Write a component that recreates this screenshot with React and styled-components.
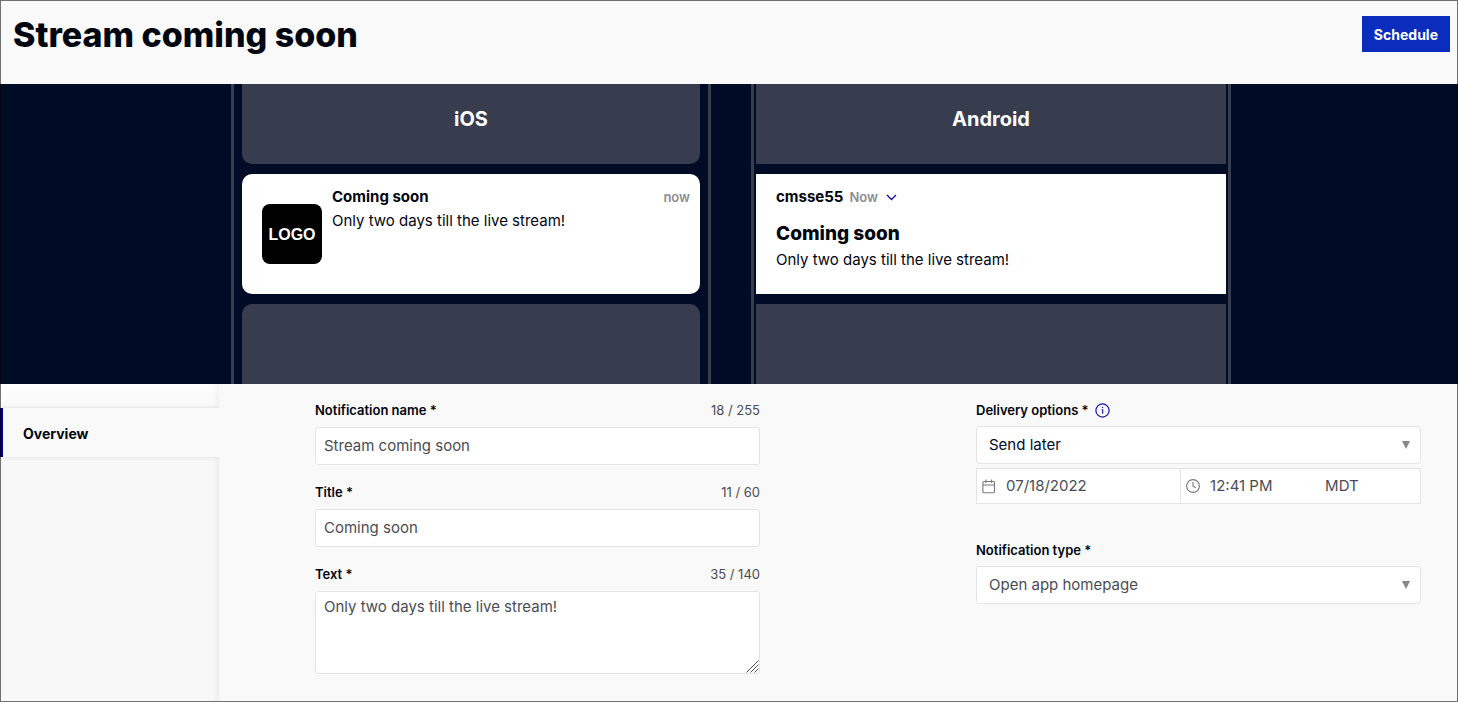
import { useState } from "react";
import styled, { createGlobalStyle } from "styled-components";

function App() {
  const [name, setName] = useState("Stream coming soon");
  const [title, setTitle] = useState("Coming soon");
  const [text, setText] = useState("Only two days till the live stream!");
  const [date, setDate] = useState("07/18/2022");
  const [time, setTime] = useState("12:41 PM");

  return (
    <>
      <GlobalStyle />
      <Page>
        <Header>
          <PageTitle>{name}</PageTitle>
          <ScheduleButton type="button">Schedule</ScheduleButton>
        </Header>

        <Preview>
          <Phone $inset="8px" $radius="10px">
            <Block>iOS</Block>
            <IosCard>
              <Logo>LOGO</Logo>
              <IosBody>
                <IosTop>
                  <AppName>{title}</AppName>
                  <Time>now</Time>
                </IosTop>
                <Message>{text}</Message>
              </IosBody>
            </IosCard>
            <Block />
          </Phone>
          <Phone $inset="2px" $radius="0">
            <Block>Android</Block>
            <AndroidCard>
              <AndroidTop>
                <AppName>cmsse55</AppName>
                <Time>Now</Time>
                <ChevronIcon />
              </AndroidTop>
              <AndroidTitle>{title}</AndroidTitle>
              <Message>{text}</Message>
            </AndroidCard>
            <Block />
          </Phone>
        </Preview>

        <Content>
          <Sidebar>
            <Tab href="#overview">Overview</Tab>
          </Sidebar>
          <Form>
            <Column $gap="18px">
              <Field $gap="8px">
                <LabelRow>
                  <Label htmlFor="name">Notification name *</Label>
                  <Counter>{name.length} / 255</Counter>
                </LabelRow>
                <Input id="name" value={name} onChange={(e) => setName(e.target.value)} />
              </Field>
              <Field $gap="8px">
                <LabelRow>
                  <Label htmlFor="title">Title *</Label>
                  <Counter>{title.length} / 60</Counter>
                </LabelRow>
                <Input id="title" value={title} onChange={(e) => setTitle(e.target.value)} />
              </Field>
              <Field $gap="8px">
                <LabelRow>
                  <Label htmlFor="text">Text *</Label>
                  <Counter>{text.length} / 140</Counter>
                </LabelRow>
                <TextAreaBox>
                  <TextArea id="text" value={text} onChange={(e) => setText(e.target.value)} />
                  <GripIcon />
                </TextAreaBox>
              </Field>
            </Column>

            <Column $gap="37px">
              <Field $gap="7px">
                <LabelRow>
                  <Label htmlFor="delivery">
                    Delivery options *
                    <InfoIcon />
                  </Label>
                </LabelRow>
                <SelectBox>
                  <Select id="delivery" $color="#000a1f" defaultValue="later">
                    <option value="now">Send now</option>
                    <option value="later">Send later</option>
                  </Select>
                  <ArrowIcon />
                </SelectBox>
                <DateRow>
                  <DateBox>
                    <CalendarIcon />
                    <DateInput
                      aria-label="Date"
                      value={date}
                      onChange={(e) => setDate(e.target.value)}
                    />
                  </DateBox>
                  <TimeBox>
                    <ClockIcon />
                    <DateInput
                      aria-label="Time"
                      value={time}
                      onChange={(e) => setTime(e.target.value)}
                    />
                    <Zone>MDT</Zone>
                  </TimeBox>
                </DateRow>
              </Field>
              <Field $gap="7px">
                <LabelRow>
                  <Label htmlFor="type">Notification type *</Label>
                </LabelRow>
                <SelectBox>
                  <Select id="type" $color="#4a4d55" defaultValue="home">
                    <option value="home">Open app homepage</option>
                    <option value="url">Open URL</option>
                  </Select>
                  <ArrowIcon />
                </SelectBox>
              </Field>
            </Column>
          </Form>
        </Content>
      </Page>
    </>
  );
}
export default App;

function ChevronIcon() {
  return (
    <svg width="11" height="7" viewBox="0 0 11 7" fill="none" aria-hidden="true">
      <path d="M1 1l4.5 4.5L10 1" stroke="#1414a8" strokeWidth="1.4" />
    </svg>
  );
}

function InfoIcon() {
  return (
    <svg width="15" height="15" viewBox="0 0 15 15" fill="none" aria-hidden="true">
      <circle cx="7.5" cy="7.5" r="6.6" stroke="#1414a8" strokeWidth="1.2" />
      <path d="M6.7 6.7h1v4" stroke="#1414a8" strokeWidth="1.1" />
      <circle cx="7.5" cy="4.5" r="0.7" fill="#1414a8" />
    </svg>
  );
}

function CalendarIcon() {
  return (
    <svg width="14" height="15" viewBox="0 0 14 15" fill="none" stroke="#77797e" aria-hidden="true">
      <rect x="0.9" y="2.5" width="11.6" height="11.2" rx="1" strokeWidth="1.1" />
      <path d="M1 6h11.5M3.9 0.5v3.5M9.6 0.5v3.5" strokeWidth="1.1" />
    </svg>
  );
}

function ClockIcon() {
  return (
    <svg width="14" height="14" viewBox="0 0 14 14" fill="none" stroke="#77797e" aria-hidden="true">
      <circle cx="7" cy="7" r="6.4" strokeWidth="1.1" />
      <path d="M7 3v4.2l2.8 1.6" strokeWidth="1.1" />
    </svg>
  );
}

function ArrowIcon() {
  return (
    <Arrow width="8" height="8" viewBox="0 0 8 8" aria-hidden="true">
      <path d="M0 0h8L4 8z" fill="#85878c" />
    </Arrow>
  );
}

function GripIcon() {
  return (
    <Grip width="13" height="13" viewBox="0 0 13 13" stroke="#55575c" aria-hidden="true">
      <path d="M0.5 12.5l12-12M4.5 12.5l8-8M8.5 12.5l4-4" />
    </Grip>
  );
}

const GlobalStyle = createGlobalStyle`
  * {
    box-sizing: border-box;
  }

  body {
    margin: 0;
    background-color: #f9f9f9;
    color: #000510;
    font-family: Inter, "Liberation Sans", sans-serif;
    font-size: 15px;
  }

  input,
  textarea,
  select,
  button {
    font-family: inherit;
  }
`;

const Page = styled.div`
  position: relative;
  display: flex;
  flex-direction: column;
  min-height: 100vh;

  /* thin frame over everything */
  &::after {
    content: "";
    position: absolute;
    inset: 0;
    border: 1px solid rgba(0, 0, 0, 0.55);
    pointer-events: none;
  }
`;

const Header = styled.header`
  display: flex;
  justify-content: space-between;
  align-items: flex-start;
  height: 84px;
  padding: 16px 8px 0 13px;
`;

const PageTitle = styled.h1`
  margin: 0;
  font-size: 34px;
  font-weight: 800;
  line-height: 38px;
`;

const ScheduleButton = styled.button`
  height: 36px;
  padding: 0 12px;
  border: none;
  background-color: #0a2dbe;
  color: #fff;
  font-size: 14px;
  font-weight: 700;
  cursor: pointer;
`;

const Preview = styled.section`
  display: flex;
  justify-content: center;
  gap: 40px;
  height: 300px;
  padding-left: 4px;
  background-color: #000c26;
`;

const Phone = styled.div`
  display: grid;
  grid-template-rows: 80px 120px 80px;
  gap: 10px;
  width: 480px;
  padding: 0 ${(props) => props.$inset};
  border: solid #373c4e;
  border-width: 0 3px;

  & > * {
    border-radius: ${(props) => props.$radius};
  }

  & > :first-child {
    border-top-left-radius: 0;
    border-top-right-radius: 0;
  }

  & > :last-child {
    border-bottom-left-radius: 0;
    border-bottom-right-radius: 0;
  }
`;

const Block = styled.div`
  padding-top: 23px;
  background-color: #373c4e;
  color: #fff;
  font-size: 20px;
  font-weight: 700;
  line-height: 24px;
  text-align: center;
`;

const IosCard = styled.div`
  display: flex;
  gap: 10px;
  padding: 11px 10px 0 20px;
  background-color: #fff;
`;

const Logo = styled.div`
  flex: none;
  width: 60px;
  height: 60px;
  margin-top: 19px;
  border-radius: 8px;
  background-color: #000;
  color: #fff;
  font-family: "Liberation Sans", sans-serif;
  font-size: 16px;
  font-weight: 700;
  line-height: 62px;
  text-align: center;
`;

const IosBody = styled.div`
  flex: 1;
`;

const IosTop = styled.div`
  display: flex;
  justify-content: space-between;
`;

const AndroidCard = styled.div`
  padding: 11px 20px 0;
  background-color: #fff;
`;

const AndroidTop = styled.div`
  display: flex;
  align-items: center;
  gap: 6px;

  svg {
    margin-left: 2px;
  }
`;

const AppName = styled.strong`
  font-size: 15px;
  font-weight: 700;
  line-height: 24px;
`;

const Time = styled.span`
  color: #8c8e92;
  font-size: 13px;
  font-weight: 600;
  line-height: 24px;
`;

const AndroidTitle = styled.h2`
  margin: 12px 0 1px;
  font-size: 19px;
  font-weight: 800;
  line-height: 26px;
`;

const Message = styled.p`
  margin: 0;
  font-size: 15px;
  line-height: 24px;
`;

const Content = styled.main`
  display: flex;
  flex: 1;
`;

const Sidebar = styled.nav`
  flex: none;
  width: 219px;
  padding-top: 24px;
  background: linear-gradient(#fff, #f8f8f8 24px);
  box-shadow: inset -6px 0 6px -5px rgba(0, 0, 0, 0.07);
`;

const Tab = styled.a`
  display: block;
  height: 49px;
  padding-left: 20px;
  border-left: 3px solid #00008b;
  background-color: #f9f9f9;
  box-shadow: 0 0 4px rgba(0, 0, 0, 0.12);
  clip-path: inset(-6px 0 -6px 0);
  color: #000510;
  font-size: 14px;
  font-weight: 700;
  line-height: 52px;
  text-decoration: none;
`;

const Form = styled.form`
  display: grid;
  flex: 1;
  grid-template-columns: 1fr 1fr;
  align-items: start;
  column-gap: 216px;
  padding: 17px 37px 28px 96px;
`;

const Column = styled.div`
  display: flex;
  flex-direction: column;
  gap: ${(props) => props.$gap};
  min-width: 0;
`;

const Field = styled.div`
  display: flex;
  flex-direction: column;

  & > :first-child {
    margin-bottom: ${(props) => props.$gap};
  }
`;

const LabelRow = styled.div`
  display: flex;
  justify-content: space-between;
  line-height: 18px;
`;

const Label = styled.label`
  display: flex;
  align-items: center;
  gap: 6px;
  font-size: 13px;
  font-weight: 600;
`;

const Counter = styled.span`
  color: #4a4d55;
  font-size: 13px;
`;

const Input = styled.input`
  width: 100%;
  height: 38px;
  padding: 0 8px 2px;
  border: 1px solid #e4e4e4;
  border-radius: 3px;
  background-color: #fff;
  color: #4a4d55;
  font-size: 15px;
`;

const TextAreaBox = styled.div`
  position: relative;
`;

const TextArea = styled.textarea`
  display: block;
  width: 100%;
  height: 83px;
  padding: 5px 8px;
  border: 1px solid #e4e4e4;
  border-radius: 3px;
  background-color: #fff;
  color: #4a4d55;
  font-size: 15px;
  line-height: 20px;
  resize: vertical;

  &::-webkit-resizer {
    background: transparent;
  }
`;

const Grip = styled.svg`
  position: absolute;
  right: 1px;
  bottom: 1px;
  pointer-events: none;
`;

const SelectBox = styled.div`
  position: relative;
`;

const Select = styled.select`
  display: block;
  width: 100%;
  height: 38px;
  padding: 0 12px 2px;
  appearance: none;
  border: 1px solid #e4e4e4;
  border-radius: 3px;
  background-color: #fff;
  color: ${(props) => props.$color};
  font-size: 15px;
`;

const Arrow = styled.svg`
  position: absolute;
  top: 15px;
  right: 11px;
  pointer-events: none;
`;

const DateRow = styled.div`
  display: grid;
  grid-template-columns: 204fr 241fr;
  height: 36px;
  margin-top: 4px;
  border: 1px solid #e4e4e4;
  background-color: #fff;
`;

const DateBox = styled.div`
  display: flex;
  align-items: center;
  gap: 10px;
  min-width: 0;
  padding-left: 5px;
`;

const TimeBox = styled(DateBox)`
  border-left: 1px solid #e4e4e4;
`;

const DateInput = styled.input`
  width: 105px;
  padding: 0 0 2px;
  border: none;
  background: none;
  color: #4a4d55;
  font-size: 15px;
`;

const Zone = styled.span`
  padding-bottom: 2px;
  color: #4a4d55;
  font-size: 15px;
`;
